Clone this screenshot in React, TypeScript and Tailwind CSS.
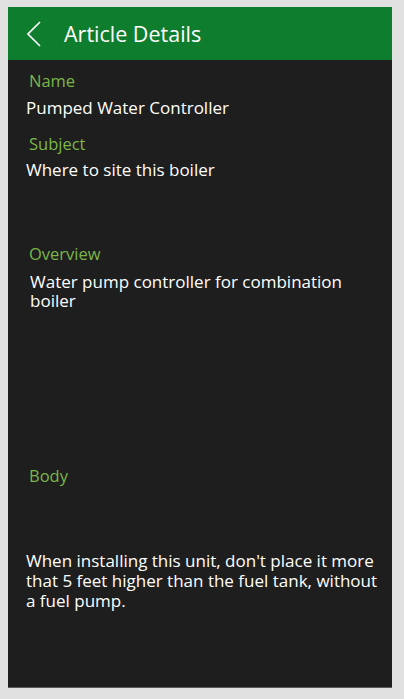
function Label({ text, className }: { text: string; className?: string }) {
  return <div className={"pl-[21px] text-[16.5px] leading-[20px] text-[#7ab648] " + (className ?? "")}>{text}</div>;
}

export default function App() {
  return (
    <div className="min-h-[699px] w-[404px] bg-[#e1e1e1] pt-[7px] pl-2" style={{ fontFamily: '"Open Sans", "Liberation Sans", sans-serif' }}>
      <div className="flex h-[681px] w-[384px] flex-col border-b border-[#5a5a5a] bg-[#1e1e1e] text-white">
        <header className="flex h-[53px] shrink-0 items-center bg-[#0f7d2e]">
          <svg className="ml-[19px] h-[26px] w-[14px]" viewBox="0 0 14 26" fill="none" stroke="white" strokeWidth="1.6">
            <polyline points="13,1 1,13 13,25" />
          </svg>
          <h1 className="ml-[23px] text-[21.5px] leading-[28px] font-normal">Article Details</h1>
        </header>
        <Label className="mt-[11px]" text="Name" />
        <div className="mt-[7px] pl-[18px] text-[17px] leading-[20px]">Pumped Water Controller</div>
        <Label className="mt-[16px]" text="Subject" />
        <div className="mt-[6px] pl-[18px] text-[17px] leading-[20px]">Where to site this boiler</div>
        <Label className="mt-[64px]" text="Overview" />
        <div className="mt-[8px] pl-[22px] pr-[18px] text-[17px] leading-[19px]">Water pump controller for combination boiler</div>
        <Label className="mt-[156px]" text="Body" />
        <div className="mt-[65px] pl-[18px] pr-[12px] text-[17px] leading-[20px]">
          When installing this unit, don't place it more that 5 feet higher than the fuel tank, without a fuel pump.
        </div>
      </div>
    </div>
  );
}
